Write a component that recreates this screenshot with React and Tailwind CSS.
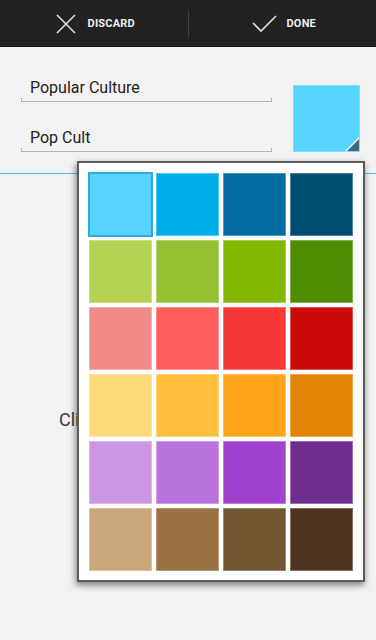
const COLORS = [
  ['#55d4ff', '#00aeeb', '#006c9f', '#004d72'],
  ['#b5d250', '#94c032', '#82b800', '#4f8c00'],
  ['#f28a8a', '#ff5c5c', '#f73838', '#cb0a0a'],
  ['#ffd87a', '#ffc03d', '#ffa51a', '#e28304'],
  ['#cc96e3', '#b975dd', '#a041cf', '#6f2d8d'],
  ['#c9a77b', '#9a7141', '#725531', '#4f3420'],
]

function Field({ value, gap }) {
  return (
    <div className={gap}>
      <div className="pl-[9px] text-[16px] leading-[20px] text-[#222]">{value}</div>
      <div className="h-[4px] border-x border-b border-[#b3b3b3]" />
    </div>
  )
}

function App() {
  const selected = '#55d4ff'

  return (
    <div className="relative min-h-[640px] bg-[#f2f2f2] font-['Roboto',sans-serif] overflow-hidden">
      <header className="flex h-[47px] items-center bg-[#222] border-b border-[#111] pt-[2px]">
        <button className="flex flex-1 items-center justify-center gap-[12px] pl-[3px] text-[#eee]">
          <svg width="20" height="20" viewBox="0 0 20 20" className="text-[#ddd]">
            <path d="M1 1 L19 19 M19 1 L1 19" stroke="currentColor" strokeWidth="1.6" fill="none" />
          </svg>
          <span className="text-[11px] font-bold tracking-[0.2px]">DISCARD</span>
        </button>
        <div className="h-[26px] w-px bg-[#444]" />
        <button className="flex flex-1 items-center justify-center gap-[10px] pl-[3px] text-[#eee]">
          <svg width="25" height="18" viewBox="0 0 25 18" className="text-[#ddd]">
            <path d="M1 8 L9 16 L24 1" stroke="currentColor" strokeWidth="1.6" fill="none" />
          </svg>
          <span className="text-[11px] font-bold tracking-[0.2px]">DONE</span>
        </button>
      </header>

      <div className="flex items-start pt-[31px]">
        <div className="ml-[21px] w-[251px]">
          <Field value="Popular Culture" />
          <Field value="Pop Cult" gap="mt-[26px]" />
        </div>
        <div className="relative ml-auto mr-[16px] mt-[7px] h-[67px] w-[67px] border border-[#7ddfff] bg-[#55d4ff]">
          <svg width="14" height="14" viewBox="0 0 14 14" className="absolute bottom-0 right-0">
            <polygon points="14,0 14,14 0,14" fill="#ffffff" />
            <polygon points="14,2 14,14 2,14" fill="#3d6c82" />
          </svg>
        </div>
      </div>

      <div className="mt-[21px] h-px bg-[#5cb6e2]" />

      <p className="mt-[234px] pl-[59px] whitespace-nowrap text-[18px] leading-[24px] text-[#3a3a3a]">
        Click the colour to change it
      </p>

      <div className="absolute left-[77px] top-[161px] h-[421px] w-[288px] border-2 border-[#5c5c5c] bg-white pl-[8px] pt-[8px] shadow-[-1px_3px_7px_rgba(0,0,0,0.5)]">
        <div className="grid grid-cols-[repeat(4,67px)] grid-rows-[repeat(6,67px)]">
          {COLORS.flat().map((c) =>
            c === selected ? (
              <div key={c} className="m-[1px] border-2 border-[#35a9d6] p-px" style={{ backgroundColor: c }}>
                <div className="h-full w-full" style={{ backgroundColor: c }} />
              </div>
            ) : (
              <div key={c} className="m-[2px] border border-white/30" style={{ backgroundColor: c }} />
            )
          )}
        </div>
      </div>
    </div>
  )
}

export default App
